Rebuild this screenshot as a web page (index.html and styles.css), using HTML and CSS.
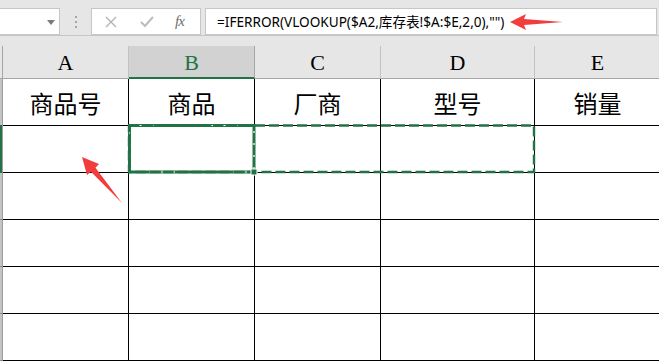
FILE: index.html
```html
<!DOCTYPE html>
<html lang="zh-CN">
<head>
    <meta charset="UTF-8">
    <title>库存表</title>
    <link rel="stylesheet" href="styles.css">
</head>
<body>

<div class="sheet">
    <div class="toolbar">
        <div class="name-box"><span class="caret"></span></div>
        <div class="grip">
            <svg width="4" height="12" viewBox="0 0 4 12"><rect x="1" y="0" width="2" height="2"/><rect x="1" y="5" width="2" height="2"/><rect x="1" y="10" width="2" height="2"/></svg>
        </div>
        <div class="fx-buttons">
            <svg class="btn-cancel" width="12" height="12" viewBox="0 0 12 12"><path d="M1 1 L11 11 M11 1 L1 11"/></svg>
            <svg class="btn-enter" width="14" height="12" viewBox="0 0 14 12"><path d="M1 6 L5 10 L13 1"/></svg>
            <span class="btn-fx">fx</span>
        </div>
        <div class="formula">=IFERROR(VLOOKUP($A2,库存表!$A:$E,2,0),"")</div>
    </div>
    <div class="band"></div>

    <div class="grid">
        <div class="corner"></div>
        <div class="col-head">A</div>
        <div class="col-head active">B</div>
        <div class="col-head">C</div>
        <div class="col-head">D</div>
        <div class="col-head">E</div>

        <div class="row-head"></div>
        <div class="cell">商品号</div>
        <div class="cell">商品</div>
        <div class="cell">厂商</div>
        <div class="cell">型号</div>
        <div class="cell">销量</div>

        <div class="row-head"></div>
        <div class="cell"></div><div class="cell"></div><div class="cell"></div><div class="cell"></div><div class="cell"></div>
        <div class="row-head"></div>
        <div class="cell"></div><div class="cell"></div><div class="cell"></div><div class="cell"></div><div class="cell"></div>
        <div class="row-head"></div>
        <div class="cell"></div><div class="cell"></div><div class="cell"></div><div class="cell"></div><div class="cell"></div>
        <div class="row-head"></div>
        <div class="cell"></div><div class="cell"></div><div class="cell"></div><div class="cell"></div><div class="cell"></div>
        <div class="row-head"></div>
        <div class="cell"></div><div class="cell"></div><div class="cell"></div><div class="cell"></div><div class="cell"></div>
    </div>

    <!-- выделение, рамка копирования и стрелки поверх таблицы -->
    <svg class="overlay" width="659" height="362" viewBox="0 0 659 362">
        <rect x="0" y="125" width="2" height="48" fill="#217346"/>
        <rect x="129.5" y="125.5" width="124.5" height="46.5" fill="none" stroke="#217346" stroke-width="3"/>
        <rect x="129.5" y="125.5" width="124.5" height="46.5" fill="none" stroke="#fff" stroke-width="1.2" stroke-dasharray="2 10" stroke-dashoffset="-10"/>
        <rect x="129" y="125.5" width="405" height="46.5" fill="none" stroke="#217346" stroke-width="2.4" stroke-dasharray="10 4"/>
        <rect x="251" y="169" width="6" height="6" fill="#217346" stroke="#fff" stroke-width="1"/>
        <polygon class="arrow" points="510,22 526,14 524,19 563,22 524,25 526,30"/>
        <polygon class="arrow" points="82,157 99,164 95.5,167.8 122,203 90.9,171.8 87,175"/>
    </svg>
</div>

</body>
</html>
```

FILE: styles.css
```css
body {
    margin: 0;
    background-color: #fff;
}

.sheet {
    position: relative;
    width: 659px;
    height: 362px;
    overflow: hidden;
}

.toolbar {
    display: flex;
    height: 27px;
    padding-top: 8px;
    background-color: #e6e6e6;
    border-bottom: 1px solid #c6c6c6;
}

.name-box {
    width: 60px;
    height: 27px;
    box-sizing: border-box;
    background-color: #fff;
    border: 1px solid #c6c6c6;
    border-left: none;
    position: relative;
}

.caret {
    position: absolute;
    left: 47px;
    top: 11px;
    width: 0;
    height: 0;
    border-left: 4px solid transparent;
    border-right: 4px solid transparent;
    border-top: 5px solid #7a7a7a;
}

.grip {
    width: 31px;
    display: flex;
    justify-content: center;
    align-items: center;
}

.grip svg {
    fill: #a6a6a6;
}

.fx-buttons {
    width: 110px;
    height: 27px;
    box-sizing: border-box;
    background-color: #fff;
    border: 1px solid #c6c6c6;
    display: flex;
    align-items: center;
    padding-left: 13px;
}

.btn-cancel {
    stroke: #b4b4b4;
    stroke-width: 1.4;
    fill: none;
}

.btn-enter {
    margin-left: 23px;
    stroke: #bcbcbc;
    stroke-width: 2;
    fill: none;
}

.btn-fx {
    margin-left: 21px;
    font-family: "Liberation Serif", serif;
    font-style: italic;
    font-size: 15px;
    color: #6e6e6e;
    letter-spacing: -1px;
}

.formula {
    margin-left: 4px;
    width: 452px;
    height: 27px;
    box-sizing: border-box;
    background-color: #fff;
    border: 1px solid #c6c6c6;
    padding-left: 11px;
    font-family: "Noto Sans", "Noto Sans CJK SC", sans-serif;
    font-size: 13.6px;
    line-height: 25px;
    color: #000;
    white-space: nowrap;
}

.band {
    height: 10px;
    background-color: #e6e6e6;
}

.grid {
    display: grid;
    grid-template-columns: 3px 126px 126px 126px 154px 125px;
    grid-template-rows: 33px 47px 47px 47px 47px 47px 47px;
}

.corner {
    background-color: #e6e6e6;
    border-right: 1px solid #a6a6a6;
    border-bottom: 1px solid #a6a6a6;
}

.col-head {
    background-color: #e6e6e6;
    border-right: 1px solid #c2c2c2;
    border-bottom: 1px solid #a6a6a6;
    display: flex;
    justify-content: center;
    align-items: center;
    font-family: "Liberation Serif", serif;
    font-size: 22px;
    color: #000;
    padding-top: 2px;
}

.col-head.active {
    background-color: #d2d2d2;
    color: #217346;
    border-bottom: 2px solid #217346;
    border-right-color: #a6a6a6;
}

.row-head {
    background-color: #c4c4c4;
    border-right: 1px solid #9e9e9e;
    border-bottom: 1px solid #8a8a8a;
}

.cell {
    border-right: 1px solid #000;
    border-bottom: 1px solid #000;
    display: flex;
    justify-content: center;
    align-items: center;
    font-family: "Liberation Serif", "Noto Sans CJK SC", serif;
    font-size: 24px;
    color: #000;
}

.grid > :nth-child(6n),
.grid > :nth-child(6n + 12) {
    border-right: none;
}

.overlay {
    position: absolute;
    left: 0;
    top: 0;
}

.arrow {
    fill: #f23d3d;
}
```
